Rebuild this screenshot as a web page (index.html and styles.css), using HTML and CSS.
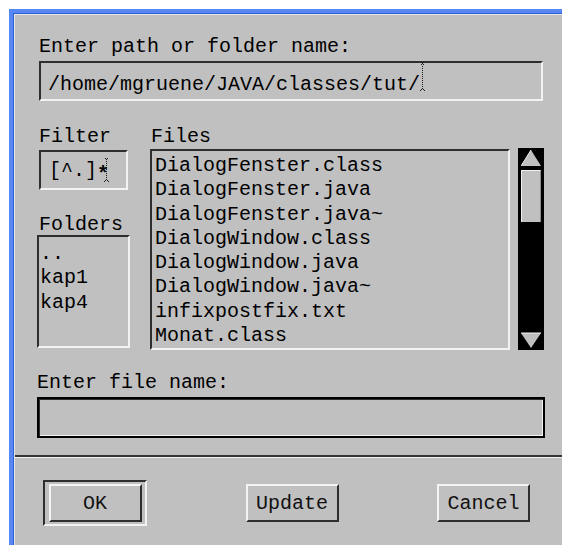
FILE: index.html
```html
<!DOCTYPE html>
<html>
<head>
<meta charset="utf-8">
<title>File Selection</title>
<link rel="stylesheet" href="styles.css">
</head>
<body>
<div class="window">
  <div class="frame">
    <div class="panel">
      <div class="content">
        <div class="label path-label">Enter path or folder name:</div>
        <div class="field path-field">
          <span>/home/mgruene/JAVA/classes/tut/</span><svg class="caret" width="6" height="29" viewBox="0 0 6 29"><g fill="#1c1c1c"><rect x="1" y="0" width="1" height="1"/><rect x="3" y="0" width="1" height="1"/><rect x="2" y="1" width="1" height="1"/><rect x="1" y="2" width="1" height="1"/><rect x="3" y="2" width="1" height="1"/><rect x="2" y="4" width="1" height="1"/><rect x="2" y="6" width="1" height="1"/><rect x="2" y="8" width="1" height="1"/><rect x="2" y="10" width="1" height="1"/><rect x="2" y="12" width="1" height="1"/><rect x="2" y="14" width="1" height="1"/><rect x="2" y="16" width="1" height="1"/><rect x="2" y="18" width="1" height="1"/><rect x="2" y="20" width="1" height="1"/><rect x="2" y="22" width="1" height="1"/><rect x="2" y="24" width="1" height="1"/><rect x="2" y="26" width="1" height="1"/><rect x="1" y="27" width="1" height="1"/><rect x="3" y="27" width="1" height="1"/><rect x="0" y="28" width="1" height="1"/><rect x="4" y="28" width="1" height="1"/></g></svg>
        </div>

        <div class="browse">
          <div class="side">
            <div class="label side-label">Filter</div>
            <div class="field filter-field">
              <span>[^.]</span><span class="star">*</span><svg class="caret filter-caret" width="6" height="24" viewBox="0 0 6 24"><g fill="#1c1c1c"><rect x="1" y="0" width="1" height="1"/><rect x="3" y="0" width="1" height="1"/><rect x="2" y="1" width="1" height="1"/><rect x="2" y="3" width="1" height="1"/><rect x="2" y="5" width="1" height="1"/><rect x="2" y="7" width="1" height="1"/><rect x="2" y="9" width="1" height="1"/><rect x="2" y="11" width="1" height="1"/><rect x="2" y="13" width="1" height="1"/><rect x="2" y="15" width="1" height="1"/><rect x="2" y="17" width="1" height="1"/><rect x="2" y="19" width="1" height="1"/><rect x="2" y="21" width="1" height="1"/><rect x="1" y="22" width="1" height="1"/><rect x="3" y="22" width="1" height="1"/><rect x="0" y="23" width="1" height="1"/><rect x="4" y="23" width="1" height="1"/></g></svg>
            </div>
            <div class="label side-label folders-label">Folders</div>
            <ul class="list folder-list">
              <li>..</li>
              <li>kap1</li>
              <li>kap4</li>
            </ul>
          </div>

          <div class="files">
            <div class="label files-label">Files</div>
            <div class="files-row">
              <ul class="list file-list">
                <li>DialogFenster.class</li>
                <li>DialogFenster.java</li>
                <li>DialogFenster.java~</li>
                <li>DialogWindow.class</li>
                <li>DialogWindow.java</li>
                <li>DialogWindow.java~</li>
                <li>infixpostfix.txt</li>
                <li>Monat.class</li>
              </ul>
              <div class="scrollbar">
                <svg class="arrow" width="20" height="22" viewBox="0 0 20 22"><polygon points="10,2 0,18 20,18" fill="#c0c0c0"/><polyline points="10,2 0,18" fill="none" stroke="#f0f0f0" stroke-width="1"/></svg>
                <div class="thumb"></div>
                <div class="trough"></div>
                <svg class="arrow" width="20" height="19" viewBox="0 0 20 19"><polygon points="0,2 20,2 10,17" fill="#c0c0c0"/><polyline points="0,2 20,2" fill="none" stroke="#f0f0f0" stroke-width="1"/></svg>
              </div>
            </div>
          </div>
        </div>

        <div class="label name-label">Enter file name:</div>
        <div class="field name-field"></div>
      </div>

      <div class="actions">
        <div class="default-ring"><button class="btn">OK</button></div>
        <button class="btn">Update</button>
        <button class="btn">Cancel</button>
      </div>
    </div>
  </div>
</div>
</body>
</html>
```

FILE: styles.css
```css
html, body {
  margin: 0;
  padding: 0;
  background: #ffffff;
  width: 562px;
  height: 545px;
  overflow: hidden;
}

body {
  font-family: "Liberation Mono", "DejaVu Sans Mono", monospace;
  font-size: 20px;
  color: #000;
}

/* window manager frame: blue edge on the top and left */
.window {
  margin: 9px 0 0 9px;
  height: 536px;
  border-top: 4px solid #5687f2;
  border-left: 4px solid #5687f2;
  box-sizing: border-box;
}

.frame {
  height: 100%;
  border-top: 1px solid #2f5fd6;
  border-left: 1px solid #2f5fd6;
  box-sizing: border-box;
}

.panel {
  height: 100%;
  background: #c0c0c0;
  border-top: 1px solid #e6e6e6;
  border-left: 1px solid #e6e6e6;
  box-sizing: border-box;
  display: flex;
  flex-direction: column;
}

.content {
  padding: 22px 0 17px 22px;
}

.label {
  line-height: 20px;
  height: 20px;
  white-space: pre;
}

/* sunken text field / list */
.field,
.list {
  box-sizing: border-box;
  border-style: solid;
  border-width: 2px;
  border-color: #2e2e2e #f2f2f2 #f2f2f2 #2e2e2e;
}

.path-label {
  margin-left: 2px;
}

.path-field {
  margin: 4px 0 0 2px;
  width: 504px;
  height: 40px;
  padding: 12px 0 0 7px;
  display: flex;
  align-items: flex-start;
  line-height: 20px;
}

.caret {
  display: block;
  margin-top: -13px;
}

.browse {
  display: flex;
  margin-top: 26px;
}

.side {
  width: 93px;
  display: flex;
  flex-direction: column;
}

.side-label {
  margin-left: 2px;
}

.filter-field {
  margin: 3px 0 0 2px;
  width: 89px;
  height: 40px;
  padding: 9px 0 0 8px;
  display: flex;
  align-items: flex-start;
  line-height: 20px;
}

.star {
  font-weight: bold;
  position: relative;
  top: 4px;
}

.filter-caret {
  margin: -3px 0 0 -5px;
}

.folders-label {
  margin-top: 25px;
}

ul.list {
  margin: 0;
  list-style: none;
  line-height: 24.3px;
  overflow: hidden;
}

ul.list li {
  white-space: pre;
}

.folder-list {
  margin-top: 2px;
  width: 93px;
  height: 113px;
  padding: 5px 0 0 1px;
}

.files {
  margin-left: 20px;
  display: flex;
  flex-direction: column;
}

.files-label {
  margin-left: 1px;
}

.files-row {
  display: flex;
  margin-top: 2px;
}

.file-list {
  width: 360px;
  height: 201px;
  padding: 3px 0 0 3px;
}

/* black trough with grey arrows and slider */
.scrollbar {
  margin: -1px 0 0 8px;
  width: 26px;
  height: 202px;
  box-sizing: border-box;
  padding: 0 3px;
  background: #000;
  display: flex;
  flex-direction: column;
}

.arrow {
  display: block;
  flex: none;
}

.thumb {
  flex: none;
  height: 52px;
  box-sizing: border-box;
  background: #c0c0c0;
  border-top: 1px solid #f0f0f0;
  border-left: 1px solid #f0f0f0;
  border-right: 1px solid #8a8a8a;
}

.trough {
  flex: 1;
}

.name-label {
  margin-top: 23px;
}

.name-field {
  margin-top: 4px;
  width: 508px;
  height: 41px;
  border: 2px solid #000;
  box-shadow: inset 1px 1px 0 #2e2e2e, inset -1px -1px 0 #f2f2f2;
}

/* separator and button row */
.actions {
  flex: 1;
  border-top: 2px solid #353535;
  box-shadow: inset 0 1px 0 #f0f0f0;
  padding: 23px 32px 0 28px;
  display: flex;
  justify-content: space-between;
  align-items: flex-start;
}

.default-ring {
  width: 104px;
  height: 46px;
  box-sizing: border-box;
  border-style: solid;
  border-width: 2px;
  border-color: #2e2e2e #f2f2f2 #f2f2f2 #2e2e2e;
  display: flex;
  align-items: center;
  justify-content: center;
}

.btn {
  width: 93px;
  height: 38px;
  margin-top: 4px;
  box-sizing: border-box;
  background: #c0c0c0;
  border-style: solid;
  border-width: 2px;
  border-color: #f4f4f4 #2e2e2e #2e2e2e #f4f4f4;
  font-family: "Liberation Mono", "DejaVu Sans Mono", monospace;
  font-size: 20px;
  color: #111;
  padding: 0;
}

.default-ring .btn {
  margin-top: 0;
}
```
